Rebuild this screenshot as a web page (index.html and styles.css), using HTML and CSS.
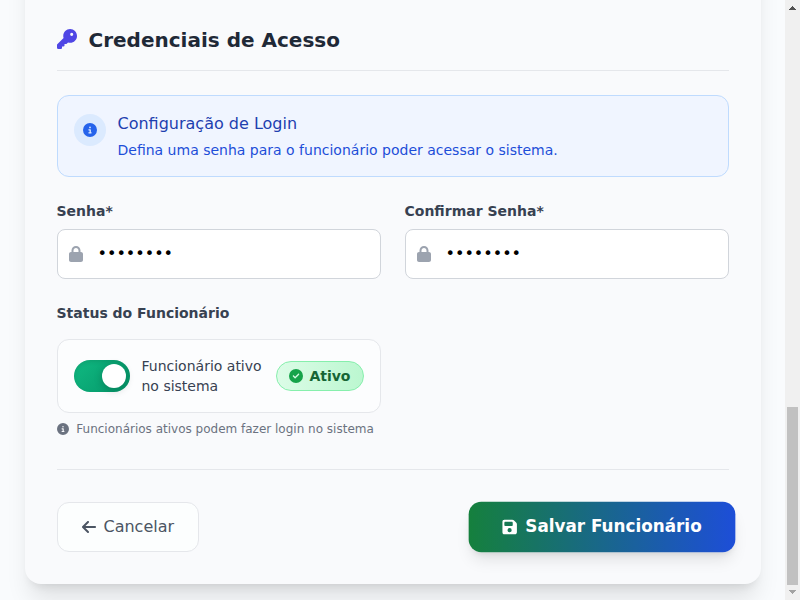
FILE: index.html
```html
<!DOCTYPE html>
<html lang="pt-BR">
<head>
<meta charset="utf-8">
<title>Funcionário</title>
<link rel="stylesheet" href="styles.css">
</head>
<body>
<main class="page">
  <form class="card">
    <h2 class="section-title">
      <svg class="icon-key" viewBox="0 0 512 512"><path d="M336 352c97.2 0 176-78.8 176-176S433.2 0 336 0S160 78.8 160 176c0 18.7 2.9 36.8 8.3 53.7L7 391c-4.5 4.5-7 10.6-7 17v80c0 13.3 10.7 24 24 24h80c13.3 0 24-10.7 24-24V448h40c13.3 0 24-10.7 24-24V384h40c6.4 0 12.5-2.5 17-7l33.3-33.3c16.9 5.4 35 8.3 53.7 8.3zM376 96a40 40 0 1 1 0 80 40 40 0 1 1 0-80z"/></svg>
      <span>Credenciais de Acesso</span>
    </h2>
    <div class="info">
      <div class="info-badge">
        <svg class="icon-14" viewBox="0 0 512 512"><path d="M256 512A256 256 0 1 0 256 0a256 256 0 1 0 0 512zM216 336h24V272H216c-13.3 0-24-10.7-24-24s10.7-24 24-24h48c13.3 0 24 10.7 24 24v88h8c13.3 0 24 10.7 24 24s-10.7 24-24 24H216c-13.3 0-24-10.7-24-24s10.7-24 24-24zm40-208a32 32 0 1 1 0 64 32 32 0 1 1 0-64z"/></svg>
      </div>
      <div>
        <h3 class="info-title">Configuração de Login</h3>
        <p class="info-text">Defina uma senha para o funcionário poder acessar o sistema.</p>
      </div>
    </div>
    <div class="grid">
      <div>
        <label class="label" for="senha">Senha*</label>
        <div class="field">
          <svg class="icon-lock" viewBox="0 0 448 512"><path d="M144 144v48H304V144c0-44.2-35.8-80-80-80s-80 35.8-80 80zM80 192V144C80 64.5 144.5 0 224 0s144 64.5 144 144v48h16c35.3 0 64 28.7 64 64V448c0 35.3-28.7 64-64 64H64c-35.3 0-64-28.7-64-64V256c0-35.3 28.7-64 64-64H80z"/></svg>
          <input class="input" id="senha" type="password" value="12345678">
        </div>
      </div>
      <div>
        <label class="label" for="confirmar">Confirmar Senha*</label>
        <div class="field">
          <svg class="icon-lock" viewBox="0 0 448 512"><path d="M144 144v48H304V144c0-44.2-35.8-80-80-80s-80 35.8-80 80zM80 192V144C80 64.5 144.5 0 224 0s144 64.5 144 144v48h16c35.3 0 64 28.7 64 64V448c0 35.3-28.7 64-64 64H64c-35.3 0-64-28.7-64-64V256c0-35.3 28.7-64 64-64H80z"/></svg>
          <input class="input" id="confirmar" type="password" value="12345678">
        </div>
      </div>
      <div>
        <div class="label">Status do Funcionário</div>
        <div class="status">
          <div class="toggle"><div class="knob"></div></div>
          <div class="status-text">Funcionário ativo no sistema</div>
          <div class="pill">
            <svg class="icon-14" viewBox="0 0 512 512"><path d="M256 512A256 256 0 1 0 256 0a256 256 0 1 0 0 512zM369 209L241 337c-9.4 9.4-24.6 9.4-33.9 0l-64-64c-9.4-9.4-9.4-24.6 0-33.9s24.6-9.4 33.9 0l47 47L335 175c9.4-9.4 24.6-9.4 33.9 0s9.4 24.6 0 33.9z"/></svg>
            <span>Ativo</span>
          </div>
        </div>
        <p class="note">
          <svg class="icon-12" viewBox="0 0 512 512"><path d="M256 512A256 256 0 1 0 256 0a256 256 0 1 0 0 512zM216 336h24V272H216c-13.3 0-24-10.7-24-24s10.7-24 24-24h48c13.3 0 24 10.7 24 24v88h8c13.3 0 24 10.7 24 24s-10.7 24-24 24H216c-13.3 0-24-10.7-24-24s10.7-24 24-24zm40-208a32 32 0 1 1 0 64 32 32 0 1 1 0-64z"/></svg>
          <span>Funcionários ativos podem fazer login no sistema</span>
        </p>
      </div>
    </div>
    <div class="actions">
      <button class="cancel" type="button">
        <svg class="icon-16" viewBox="0 0 448 512"><path d="M9.4 233.4c-12.5 12.5-12.5 32.8 0 45.3l160 160c12.5 12.5 32.8 12.5 45.3 0s12.5-32.8 0-45.3L109.2 288 416 288c17.7 0 32-14.3 32-32s-14.3-32-32-32l-306.7 0L214.6 118.6c12.5-12.5 12.5-32.8 0-45.3s-32.8-12.5-45.3 0l-160 160z"/></svg>
        <span>Cancelar</span>
      </button>
      <button class="save" type="button">
        <svg class="icon-16" viewBox="0 0 448 512"><path d="M64 32C28.7 32 0 60.7 0 96V416c0 35.3 28.7 64 64 64H384c35.3 0 64-28.7 64-64V173.3c0-17-6.7-33.3-18.7-45.3L352 50.7C340 38.7 323.7 32 306.7 32H64zm0 96c0-17.7 14.3-32 32-32H288c17.7 0 32 14.3 32 32v64c0 17.7-14.3 32-32 32H96c-17.7 0-32-14.3-32-32V128zM224 288a64 64 0 1 1 0 128 64 64 0 1 1 0-128z"/></svg>
        <span>Salvar Funcionário</span>
      </button>
    </div>
  </form>
</main>
<div class="scrollbar">
  <svg class="arrow" viewBox="0 0 15 15" shape-rendering="crispEdges"><path fill="#505050" d="M7 6h1v1h1v1h1v1h1v1H4V9h1V8h1V7h1z"/></svg>
  <div class="track"><div class="thumb"></div></div>
  <svg class="arrow" viewBox="0 0 15 15" shape-rendering="crispEdges"><path fill="#a3a3a3" d="M4 5h7v1h-1v1H9v1H8v1H7V8H6V7H5V6H4z"/></svg>
</div>
</body>
</html>
```
FILE: styles.css
```css
* { box-sizing: border-box; margin: 0; padding: 0; }
body {
  display: flex;
  width: 800px;
  height: 600px;
  overflow: hidden;
  background: #f9fafb;
  font-family: "DejaVu Sans", sans-serif;
  font-size: 16px;
  line-height: 24px;
  color: #374151;
}
svg { display: block; flex: none; fill: currentColor; }
button, input { font: inherit; }
.page {
  width: 785px;
  height: 600px;
  padding: 0 24.5px 16px;
  overflow: hidden;
  display: flex;
  flex-direction: column;
  justify-content: flex-end;
  background: #f9fbfd;
}
.card {
  flex: none;
  padding: 226px 32px 32px;
  border-radius: 16px;
  background: #f9fafc;
  box-shadow: 0 20px 25px -5px rgba(0, 0, 0, .1), 0 8px 10px -6px rgba(0, 0, 0, .1);
}
.section-title {
  display: flex;
  align-items: center;
  gap: 12px;
  padding-bottom: 16px;
  margin-bottom: 24px;
  border-bottom: 1px solid #e5e7eb;
  font-size: 20px;
  line-height: 28px;
  color: #1f2937;
}
.icon-key { width: 20px; height: 20px; margin-bottom: 2px; color: #4f46e5; }
.icon-12 { width: 12px; height: 12px; }
.icon-14 { width: 14px; height: 14px; }
.icon-16 { width: 14px; height: 16px; }
.info {
  display: flex;
  gap: 12px;
  padding: 16px;
  margin-bottom: 24px;
  border: 1px solid #bfdbfe;
  border-radius: 12px;
  background: #f0f5ff;
}
.info-badge {
  display: flex;
  align-items: center;
  justify-content: center;
  width: 32px;
  height: 32px;
  margin-top: 2px;
  border-radius: 50%;
  background: #dbeafe;
  color: #2563eb;
}
.info-title { margin-bottom: 4px; font-size: 16px; font-weight: 400; color: #1e40af; }
.info-text { font-size: 14px; line-height: 20px; color: #1d4ed8; }
.grid { display: grid; grid-template-columns: 1fr 1fr; gap: 24px; }
.label { display: block; margin-bottom: 8px; font-size: 14px; font-weight: 700; line-height: 20px; }
.field {
  display: flex;
  align-items: center;
  gap: 15px;
  height: 50px;
  padding: 0 12px 0 11px;
  border: 1px solid #d1d5db;
  border-radius: 8px;
  background: #fff;
}
.icon-lock { width: 14px; height: 16px; color: #9ca3af; }
.input { flex: 1; min-width: 0; height: 48px; padding-bottom: 2px; border: 0; outline: 0; background: transparent; color: #000; }
.status {
  display: flex;
  align-items: center;
  height: 74px;
  margin-top: 16px;
  padding: 0 16px;
  border: 1px solid #e5e7eb;
  border-radius: 12px;
  background: #fcfdfe;
}
.toggle {
  display: flex;
  justify-content: flex-end;
  flex: none;
  width: 56px;
  height: 32px;
  padding: 4px;
  border-radius: 16px;
  background: linear-gradient(135deg, #10b981, #059669);
  box-shadow: inset 0 2px 4px rgba(0, 0, 0, .1);
}
.knob { width: 24px; height: 24px; border-radius: 50%; background: #fff; box-shadow: 0 2px 8px rgba(0, 0, 0, .2); }
.status-text { flex: 1; margin-left: 12px; font-size: 14px; line-height: 20px; }
.pill {
  display: flex;
  align-items: center;
  gap: 6.5px;
  height: 30px;
  padding: 0 12px;
  border: 1px solid #86efac;
  border-radius: 15px;
  background: linear-gradient(90deg, #dcfce7, #bbf7d0);
  font-size: 14px;
  font-weight: 700;
  color: #166534;
}
.pill svg { color: #16a34a; }
.note { display: flex; align-items: center; gap: 7.8px; margin-top: 8px; font-size: 12px; line-height: 16px; color: #6b7280; }
.actions {
  display: flex;
  align-items: center;
  justify-content: space-between;
  margin-top: 32px;
  padding-top: 32px;
  border-top: 1px solid #e5e7eb;
}
.cancel, .save { display: flex; align-items: center; gap: 8px; border-radius: 12px; }
.cancel { height: 50px; padding: 0 24px; border: 1px solid #e5e7eb; background: #fcfefe; color: #4b5563; }
.save {
  height: 48px;
  padding: 0 32px;
  border: 0;
  background: linear-gradient(90deg, #15803d, #1d4ed8);
  box-shadow: 0 10px 15px -3px rgba(0, 0, 0, .1), 0 4px 6px -4px rgba(0, 0, 0, .1);
  color: #fff;
  font-weight: 700;
  transform: scale(1.05);
}
.save svg { margin: 0 .5px 1px -.5px; }
.scrollbar { display: flex; flex-direction: column; width: 15px; height: 600px; background: #f0f0f0; }
.arrow { width: 15px; height: 15px; }
.track { display: flex; flex-direction: column; justify-content: flex-end; flex: 1; padding: 0 2px; }
.thumb { height: 178px; background: #c1c1c1; }
```
